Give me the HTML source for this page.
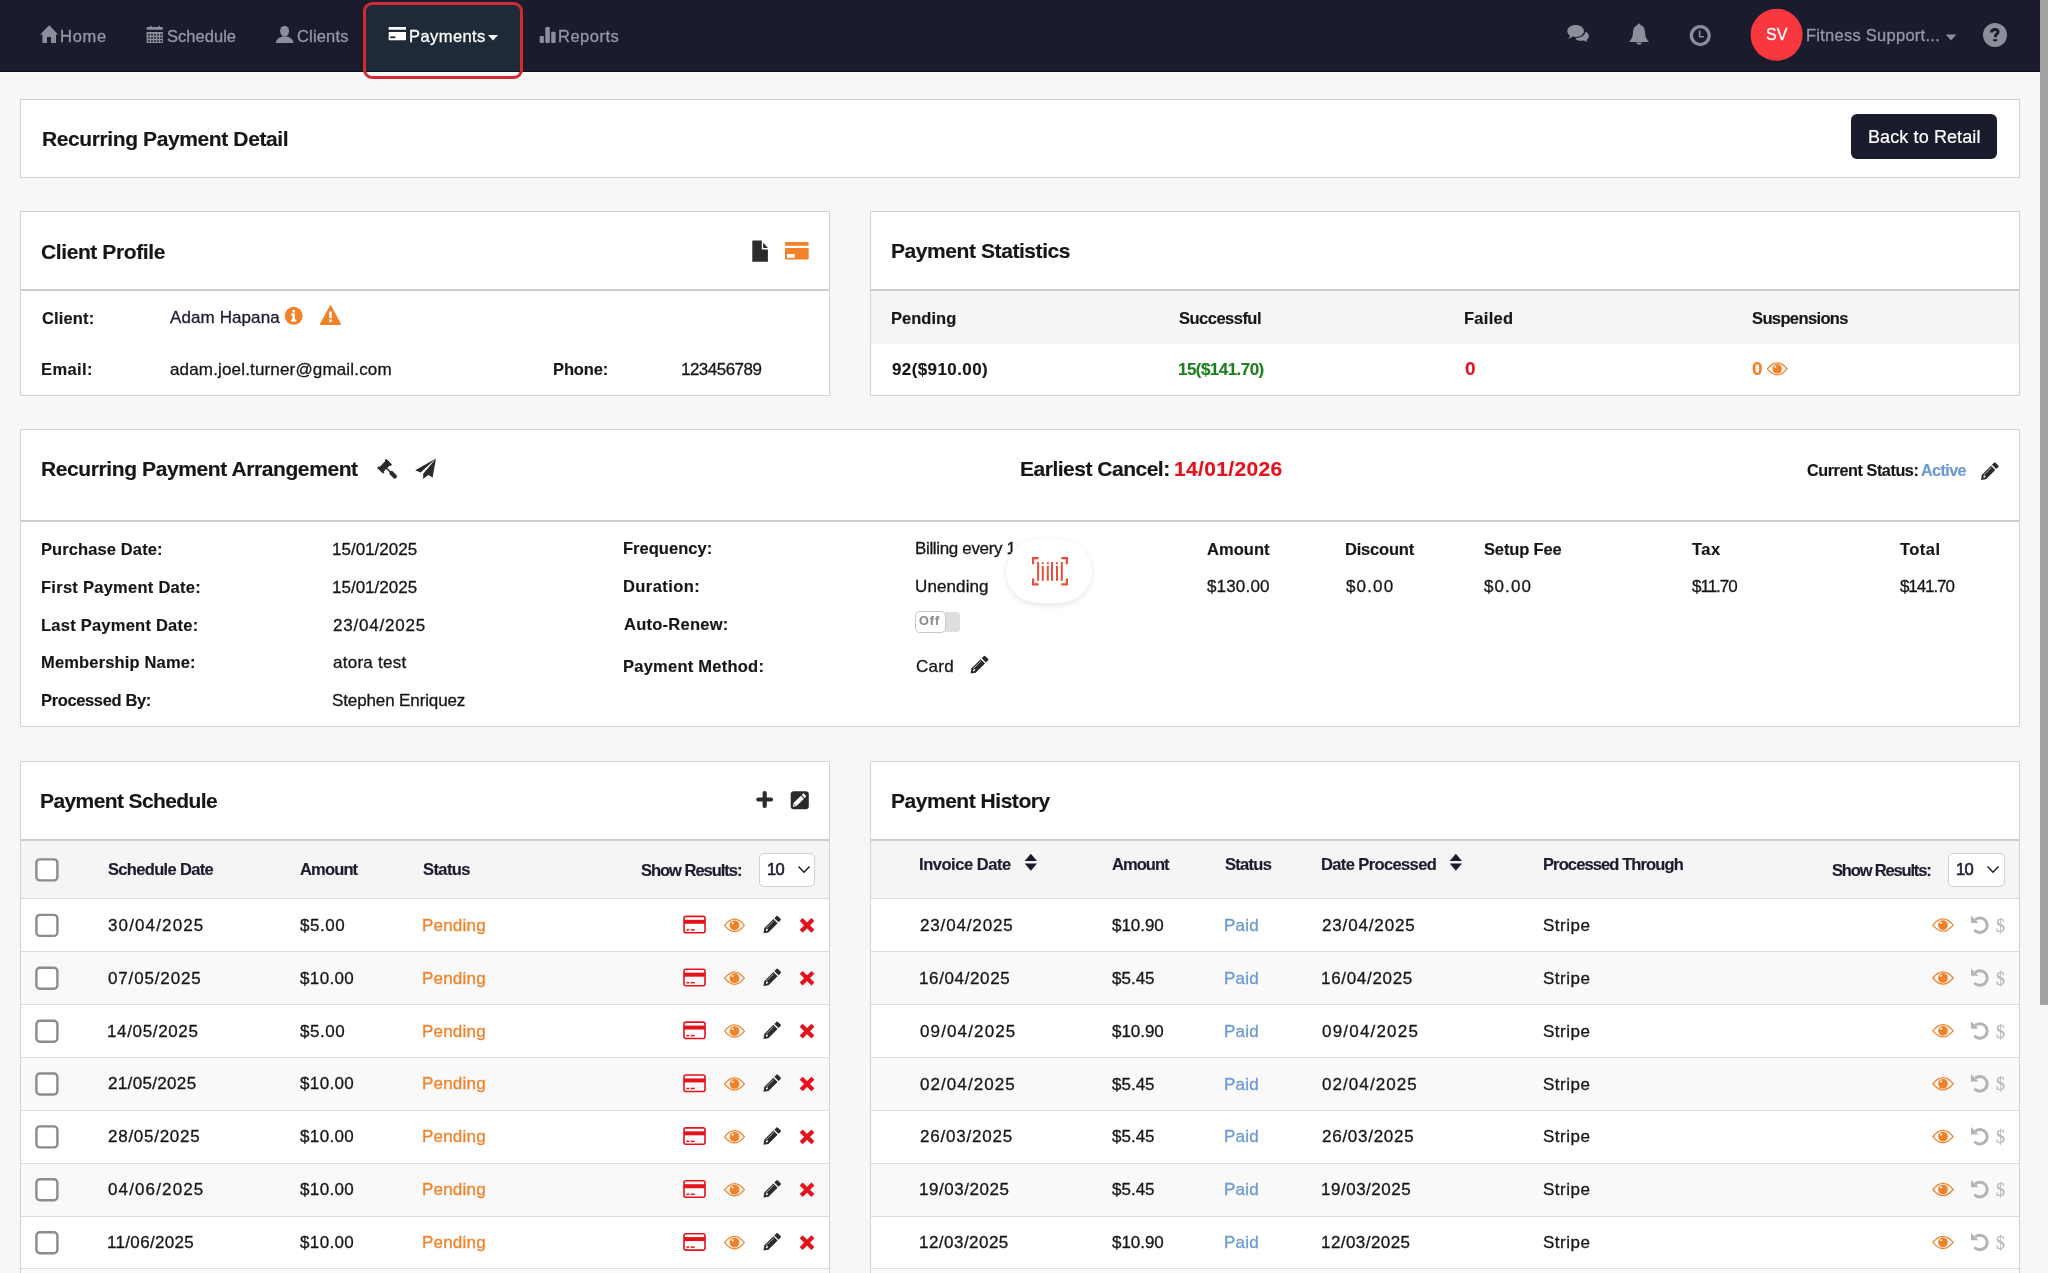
<!DOCTYPE html><html><head><meta charset="utf-8"><title>Recurring Payment Detail</title><style>
html,body{margin:0;padding:0;}
body{width:2048px;height:1273px;overflow:hidden;position:relative;background:#f7f7f7;font-family:"Liberation Sans",sans-serif;}
.t{position:absolute;white-space:nowrap;z-index:5;will-change:transform;}
</style></head><body><div style="position:absolute;left:0px;top:0px;width:2040px;height:71px;background:#1a1b2c;"></div>
<div style="position:absolute;left:0px;top:71px;width:2040px;height:1px;background:#0c0d18;"></div>
<div style="position:absolute;left:0px;top:72px;width:2040px;height:2px;background:#fbfbfb;"></div>
<div style="position:absolute;left:366px;top:5px;width:154px;height:66px;background:#1f2a38;"></div>
<div style="position:absolute;left:363px;top:2px;width:160px;height:77px;border:3px solid #cf2a35;border-radius:9px;box-sizing:border-box;"></div>
<span class="t" id="nav_home" style="left:60.10px;top:28.00px;font-size:16.5px;line-height:16.5px;font-weight:normal;color:#9598a5;letter-spacing:0.733px;-webkit-text-stroke-width:0.3px;">Home</span>
<span class="t" id="nav_sched" style="left:167.00px;top:28.00px;font-size:16.5px;line-height:16.5px;font-weight:normal;color:#9598a5;letter-spacing:0.029px;-webkit-text-stroke-width:0.3px;">Schedule</span>
<span class="t" id="nav_clients" style="left:297.00px;top:28.00px;font-size:16.5px;line-height:16.5px;font-weight:normal;color:#9598a5;letter-spacing:0.167px;-webkit-text-stroke-width:0.3px;">Clients</span>
<span class="t" id="nav_pay" style="left:409.00px;top:28.00px;font-size:16.5px;line-height:16.5px;font-weight:normal;color:#ffffff;letter-spacing:0.429px;-webkit-text-stroke-width:0.3px;-webkit-text-stroke:0.3px #fff;">Payments</span>
<span class="t" id="nav_reports" style="left:558.00px;top:28.00px;font-size:16.5px;line-height:16.5px;font-weight:normal;color:#9598a5;letter-spacing:0.500px;-webkit-text-stroke-width:0.3px;">Reports</span>
<span class="t" id="nav_fit" style="left:1806.00px;top:27.00px;font-size:16.5px;line-height:16.5px;font-weight:normal;color:#9598a5;letter-spacing:0.259px;-webkit-text-stroke-width:0.3px;">Fitness Support...</span>
<span class="t" id="nav_sv" style="left:1766.00px;top:27.00px;font-size:16px;line-height:16px;font-weight:normal;color:#ffffff;letter-spacing:0.000px;-webkit-text-stroke-width:0.3px;-webkit-text-stroke:0.3px #fff;">SV</span>
<div style="position:absolute;left:2040px;top:0px;width:8px;height:1273px;background:#f7f7f7;"></div>
<div style="position:absolute;left:2040px;top:0px;width:8px;height:1005px;background:#a3a3a3;"></div>
<div style="position:absolute;left:20px;top:99px;width:2000px;height:79px;background:#fff;border:1px solid #d2d2d2;box-sizing:border-box;"></div>
<span class="t" id="h_rpd" style="left:41.80px;top:128.00px;font-size:21px;line-height:21px;font-weight:bold;color:#161616;letter-spacing:-0.391px;-webkit-text-stroke-width:0.15px;">Recurring Payment Detail</span>
<div style="position:absolute;left:1851px;top:113.5px;width:146px;height:45px;background:#1a1b2c;border-radius:6px;"></div>
<span class="t" id="btn_back" style="left:1868.00px;top:128.00px;font-size:18px;line-height:18px;font-weight:normal;color:#ffffff;letter-spacing:0.108px;-webkit-text-stroke-width:0.3px;-webkit-text-stroke:0.2px #fff;">Back to Retail</span>
<div style="position:absolute;left:20px;top:211px;width:810px;height:185px;background:#fff;border:1px solid #d2d2d2;box-sizing:border-box;"></div>
<div style="position:absolute;left:21px;top:289px;width:808px;height:2px;background:#cdcdcd;"></div>
<span class="t" id="h_cp" style="left:41.00px;top:241.00px;font-size:21px;line-height:21px;font-weight:bold;color:#161616;letter-spacing:-0.400px;-webkit-text-stroke-width:0.15px;">Client Profile</span>
<span class="t" id="l_client" style="left:42.00px;top:310.00px;font-size:16.5px;line-height:16.5px;font-weight:bold;color:#161616;letter-spacing:0.133px;-webkit-text-stroke-width:0.15px;">Client:</span>
<span class="t" id="v_client" style="left:170.00px;top:309.00px;font-size:17px;line-height:17px;font-weight:normal;color:#1b1c30;letter-spacing:0.100px;-webkit-text-stroke-width:0.3px;">Adam Hapana</span>
<span class="t" id="l_email" style="left:41.00px;top:361.00px;font-size:16.5px;line-height:16.5px;font-weight:bold;color:#161616;letter-spacing:0.400px;-webkit-text-stroke-width:0.15px;">Email:</span>
<span class="t" id="v_email" style="left:170.00px;top:361.00px;font-size:17px;line-height:17px;font-weight:normal;color:#161616;letter-spacing:0.160px;-webkit-text-stroke-width:0.3px;">adam.joel.turner@gmail.com</span>
<span class="t" id="l_phone" style="left:553.00px;top:361.00px;font-size:16.5px;line-height:16.5px;font-weight:bold;color:#161616;letter-spacing:-0.120px;-webkit-text-stroke-width:0.15px;">Phone:</span>
<span class="t" id="v_phone" style="left:681.00px;top:361.00px;font-size:17px;line-height:17px;font-weight:normal;color:#161616;letter-spacing:-0.525px;-webkit-text-stroke-width:0.3px;">123456789</span>
<div style="position:absolute;left:870px;top:211px;width:1150px;height:185px;background:#fff;border:1px solid #d2d2d2;box-sizing:border-box;"></div>
<div style="position:absolute;left:871px;top:289px;width:1148px;height:2px;background:#cdcdcd;"></div>
<div style="position:absolute;left:871px;top:291px;width:1148px;height:53px;background:#f5f5f5;"></div>
<span class="t" id="h_ps" style="left:891.00px;top:240.00px;font-size:21px;line-height:21px;font-weight:bold;color:#161616;letter-spacing:-0.424px;-webkit-text-stroke-width:0.15px;">Payment Statistics</span>
<span class="t" id="s_pend" style="left:891.00px;top:310.00px;font-size:16.5px;line-height:16.5px;font-weight:bold;color:#161616;letter-spacing:0.033px;-webkit-text-stroke-width:0.15px;">Pending</span>
<span class="t" id="s_succ" style="left:1178.80px;top:310.00px;font-size:16.5px;line-height:16.5px;font-weight:bold;color:#161616;letter-spacing:-0.511px;-webkit-text-stroke-width:0.15px;">Successful</span>
<span class="t" id="s_fail" style="left:1464.00px;top:310.00px;font-size:16.5px;line-height:16.5px;font-weight:bold;color:#161616;letter-spacing:0.280px;-webkit-text-stroke-width:0.15px;">Failed</span>
<span class="t" id="s_susp" style="left:1752.00px;top:310.00px;font-size:16.5px;line-height:16.5px;font-weight:bold;color:#161616;letter-spacing:-0.620px;-webkit-text-stroke-width:0.15px;">Suspensions</span>
<span class="t" id="s_v1" style="left:892.00px;top:361.00px;font-size:17px;line-height:17px;font-weight:bold;color:#161616;letter-spacing:0.400px;-webkit-text-stroke-width:0.15px;">92($910.00)</span>
<span class="t" id="s_v2" style="left:1177.80px;top:361.00px;font-size:17px;line-height:17px;font-weight:bold;color:#1f7f22;letter-spacing:-0.540px;-webkit-text-stroke-width:0.15px;">15($141.70)</span>
<span class="t" id="s_v3" style="left:1465.00px;top:359.00px;font-size:19px;line-height:19px;font-weight:bold;color:#e5121c;letter-spacing:0.000px;-webkit-text-stroke-width:0.15px;">0</span>
<span class="t" id="s_v4" style="left:1752.00px;top:359.00px;font-size:19px;line-height:19px;font-weight:bold;color:#f2822a;letter-spacing:0.000px;-webkit-text-stroke-width:0.15px;">0</span>
<div style="position:absolute;left:20px;top:429px;width:2000px;height:298px;background:#fff;border:1px solid #d2d2d2;box-sizing:border-box;"></div>
<div style="position:absolute;left:21px;top:520px;width:1998px;height:2px;background:#cdcdcd;"></div>
<span class="t" id="h_rpa" style="left:41.00px;top:458.00px;font-size:21px;line-height:21px;font-weight:bold;color:#161616;letter-spacing:-0.400px;-webkit-text-stroke-width:0.15px;">Recurring Payment Arrangement</span>
<span class="t" id="h_ec" style="left:1020.00px;top:458.00px;font-size:21px;line-height:21px;font-weight:bold;color:#161616;letter-spacing:-0.493px;-webkit-text-stroke-width:0.15px;">Earliest Cancel:</span>
<span class="t" id="h_ecd" style="left:1174.00px;top:458.00px;font-size:21px;line-height:21px;font-weight:bold;color:#e5121c;letter-spacing:0.333px;-webkit-text-stroke-width:0.15px;">14/01/2026</span>
<span class="t" id="h_cs" style="left:1807.00px;top:462.00px;font-size:16.2px;line-height:16.2px;font-weight:bold;color:#161616;letter-spacing:-0.429px;-webkit-text-stroke-width:0.15px;">Current Status:</span>
<span class="t" id="h_act" style="left:1921.10px;top:462.00px;font-size:16.2px;line-height:16.2px;font-weight:bold;color:#6b9ad2;letter-spacing:-0.600px;-webkit-text-stroke-width:0.15px;">Active</span>
<span class="t" id="a_l0" style="left:41.00px;top:541.00px;font-size:16.5px;line-height:16.5px;font-weight:bold;color:#161616;letter-spacing:0.108px;-webkit-text-stroke-width:0.15px;">Purchase Date:</span>
<span class="t" id="a_v0" style="left:332.00px;top:541.00px;font-size:17px;line-height:17px;font-weight:normal;color:#161616;letter-spacing:0.000px;-webkit-text-stroke-width:0.3px;">15/01/2025</span>
<span class="t" id="a_l1" style="left:41.00px;top:579.00px;font-size:16.5px;line-height:16.5px;font-weight:bold;color:#161616;letter-spacing:0.267px;-webkit-text-stroke-width:0.15px;">First Payment Date:</span>
<span class="t" id="a_v1" style="left:332.00px;top:579.00px;font-size:17px;line-height:17px;font-weight:normal;color:#161616;letter-spacing:0.000px;-webkit-text-stroke-width:0.3px;">15/01/2025</span>
<span class="t" id="a_l2" style="left:41.00px;top:617.00px;font-size:16.5px;line-height:16.5px;font-weight:bold;color:#161616;letter-spacing:0.235px;-webkit-text-stroke-width:0.15px;">Last Payment Date:</span>
<span class="t" id="a_v2" style="left:333.00px;top:617.00px;font-size:17px;line-height:17px;font-weight:normal;color:#161616;letter-spacing:0.800px;-webkit-text-stroke-width:0.3px;">23/04/2025</span>
<span class="t" id="a_l3" style="left:41.00px;top:654.00px;font-size:16.5px;line-height:16.5px;font-weight:bold;color:#161616;letter-spacing:0.160px;-webkit-text-stroke-width:0.15px;">Membership Name:</span>
<span class="t" id="a_v3" style="left:333.00px;top:654.00px;font-size:17px;line-height:17px;font-weight:normal;color:#161616;letter-spacing:0.267px;-webkit-text-stroke-width:0.3px;">atora test</span>
<span class="t" id="a_l4" style="left:41.00px;top:692.00px;font-size:16.5px;line-height:16.5px;font-weight:bold;color:#161616;letter-spacing:-0.367px;-webkit-text-stroke-width:0.15px;">Processed By:</span>
<span class="t" id="a_v4" style="left:332.00px;top:692.00px;font-size:17px;line-height:17px;font-weight:normal;color:#161616;letter-spacing:-0.120px;-webkit-text-stroke-width:0.3px;">Stephen Enriquez</span>
<span class="t" id="a_m0" style="left:623.20px;top:540.00px;font-size:16.5px;line-height:16.5px;font-weight:bold;color:#161616;letter-spacing:0.022px;-webkit-text-stroke-width:0.15px;">Frequency:</span>
<span class="t" id="a_m1" style="left:623.20px;top:578.00px;font-size:16.5px;line-height:16.5px;font-weight:bold;color:#161616;letter-spacing:0.425px;-webkit-text-stroke-width:0.15px;">Duration:</span>
<span class="t" id="a_m2" style="left:624.20px;top:616.00px;font-size:16.5px;line-height:16.5px;font-weight:bold;color:#161616;letter-spacing:0.260px;-webkit-text-stroke-width:0.15px;">Auto-Renew:</span>
<span class="t" id="a_m3" style="left:623.20px;top:658.00px;font-size:16.5px;line-height:16.5px;font-weight:bold;color:#161616;letter-spacing:0.243px;-webkit-text-stroke-width:0.15px;">Payment Method:</span>
<span class="t" id="a_freq" style="left:914.90px;top:540.00px;font-size:17px;line-height:17px;font-weight:normal;color:#161616;letter-spacing:-0.343px;-webkit-text-stroke-width:0.3px;">Billing every 1</span>
<span class="t" id="a_dur" style="left:914.90px;top:578.00px;font-size:17px;line-height:17px;font-weight:normal;color:#161616;letter-spacing:0.114px;-webkit-text-stroke-width:0.3px;">Unending</span>
<span class="t" id="a_card" style="left:915.90px;top:658.00px;font-size:17px;line-height:17px;font-weight:normal;color:#161616;letter-spacing:0.267px;-webkit-text-stroke-width:0.3px;">Card</span>
<span class="t" id="a_h0" style="left:1207.00px;top:541.00px;font-size:16.5px;line-height:16.5px;font-weight:bold;color:#161616;letter-spacing:0.040px;-webkit-text-stroke-width:0.15px;">Amount</span>
<span class="t" id="a_n0" style="left:1207.00px;top:578.00px;font-size:17px;line-height:17px;font-weight:normal;color:#161616;letter-spacing:0.167px;-webkit-text-stroke-width:0.3px;">$130.00</span>
<span class="t" id="a_h1" style="left:1345.00px;top:541.00px;font-size:16.5px;line-height:16.5px;font-weight:bold;color:#161616;letter-spacing:-0.200px;-webkit-text-stroke-width:0.15px;">Discount</span>
<span class="t" id="a_n1" style="left:1346.00px;top:578.00px;font-size:17px;line-height:17px;font-weight:normal;color:#161616;letter-spacing:1.150px;-webkit-text-stroke-width:0.3px;">$0.00</span>
<span class="t" id="a_h2" style="left:1484.10px;top:541.00px;font-size:16.5px;line-height:16.5px;font-weight:bold;color:#161616;letter-spacing:-0.150px;-webkit-text-stroke-width:0.15px;">Setup Fee</span>
<span class="t" id="a_n2" style="left:1484.10px;top:578.00px;font-size:17px;line-height:17px;font-weight:normal;color:#161616;letter-spacing:1.100px;-webkit-text-stroke-width:0.3px;">$0.00</span>
<span class="t" id="a_h3" style="left:1692.10px;top:541.00px;font-size:16.5px;line-height:16.5px;font-weight:bold;color:#161616;letter-spacing:0.500px;-webkit-text-stroke-width:0.15px;">Tax</span>
<span class="t" id="a_n3" style="left:1692.10px;top:578.00px;font-size:17px;line-height:17px;font-weight:normal;color:#161616;letter-spacing:-1.000px;-webkit-text-stroke-width:0.3px;">$11.70</span>
<span class="t" id="a_h4" style="left:1900.10px;top:541.00px;font-size:16.5px;line-height:16.5px;font-weight:bold;color:#161616;letter-spacing:0.450px;-webkit-text-stroke-width:0.15px;">Total</span>
<span class="t" id="a_n4" style="left:1900.10px;top:578.00px;font-size:17px;line-height:17px;font-weight:normal;color:#161616;letter-spacing:-1.100px;-webkit-text-stroke-width:0.3px;">$141.70</span>
<div style="position:absolute;left:945px;top:612px;width:15px;height:20px;background:#dedede;border-radius:0 4px 4px 0;"></div>
<div style="position:absolute;left:915px;top:611px;width:31px;height:22px;background:#fff;border:1px solid #c9c9c9;border-radius:5px;box-sizing:border-box;"></div>
<span class="t" id="a_off" style="left:919.00px;top:615.00px;font-size:12.5px;line-height:12.5px;font-weight:bold;color:#8a8a8a;letter-spacing:1.000px;-webkit-text-stroke-width:0.15px;">Off</span>
<div style="position:absolute;left:1006px;top:539.3px;width:86.2px;height:63.6px;background:#fff;border-radius:32px;box-shadow:0 2px 6px rgba(0,0,0,0.10),0 0 1px rgba(0,0,0,0.08);z-index:6;"></div>
<div style="position:absolute;left:20px;top:761px;width:810px;height:520px;background:#fff;border:1px solid #d2d2d2;box-sizing:border-box;"></div>
<div style="position:absolute;left:21px;top:839px;width:808px;height:2px;background:#cdcdcd;"></div>
<div style="position:absolute;left:21px;top:841px;width:808px;height:57px;background:#f5f5f5;"></div>
<span class="t" id="h_sched" style="left:40.20px;top:790.00px;font-size:21px;line-height:21px;font-weight:bold;color:#161616;letter-spacing:-0.600px;-webkit-text-stroke-width:0.15px;">Payment Schedule</span>
<span class="t" id="t_sd" style="left:108.00px;top:861.00px;font-size:16.5px;line-height:16.5px;font-weight:bold;color:#1b1c30;letter-spacing:-0.667px;-webkit-text-stroke-width:0.15px;">Schedule Date</span>
<span class="t" id="t_am" style="left:299.90px;top:861.00px;font-size:16.5px;line-height:16.5px;font-weight:bold;color:#1b1c30;letter-spacing:-0.840px;-webkit-text-stroke-width:0.15px;">Amount</span>
<span class="t" id="t_st" style="left:422.90px;top:861.00px;font-size:16.5px;line-height:16.5px;font-weight:bold;color:#1b1c30;letter-spacing:-0.600px;-webkit-text-stroke-width:0.15px;">Status</span>
<span class="t" id="t_sr" style="left:641.10px;top:862.00px;font-size:16.5px;line-height:16.5px;font-weight:bold;color:#1b1c30;letter-spacing:-1.017px;-webkit-text-stroke-width:0.15px;">Show Results:</span>
<div style="position:absolute;left:758.5px;top:852.5px;width:56px;height:34px;background:#fff;border:1px solid #d0d0d0;border-radius:5px;box-sizing:border-box;"></div>
<span class="t" id="t_10" style="left:767.00px;top:861.00px;font-size:16.5px;line-height:16.5px;font-weight:normal;color:#1b1c30;letter-spacing:-0.600px;-webkit-text-stroke-width:0.3px;-webkit-text-stroke-width:0.6px;">10</span>
<div style="position:absolute;left:870px;top:761px;width:1150px;height:520px;background:#fff;border:1px solid #d2d2d2;box-sizing:border-box;"></div>
<div style="position:absolute;left:871px;top:839px;width:1148px;height:2px;background:#cdcdcd;"></div>
<div style="position:absolute;left:871px;top:841px;width:1148px;height:57px;background:#f5f5f5;"></div>
<span class="t" id="h_hist" style="left:891.00px;top:790.00px;font-size:21px;line-height:21px;font-weight:bold;color:#161616;letter-spacing:-0.471px;-webkit-text-stroke-width:0.15px;">Payment History</span>
<span class="t" id="u_id" style="left:919.00px;top:856.00px;font-size:16.5px;line-height:16.5px;font-weight:bold;color:#1b1c30;letter-spacing:-0.455px;-webkit-text-stroke-width:0.15px;">Invoice Date</span>
<span class="t" id="u_am" style="left:1111.80px;top:856.00px;font-size:16.5px;line-height:16.5px;font-weight:bold;color:#1b1c30;letter-spacing:-0.960px;-webkit-text-stroke-width:0.15px;">Amount</span>
<span class="t" id="u_st" style="left:1224.80px;top:856.00px;font-size:16.5px;line-height:16.5px;font-weight:bold;color:#1b1c30;letter-spacing:-0.720px;-webkit-text-stroke-width:0.15px;">Status</span>
<span class="t" id="u_dp" style="left:1321.10px;top:856.00px;font-size:16.5px;line-height:16.5px;font-weight:bold;color:#1b1c30;letter-spacing:-0.615px;-webkit-text-stroke-width:0.15px;">Date Processed</span>
<span class="t" id="u_pt" style="left:1543.00px;top:856.00px;font-size:16.5px;line-height:16.5px;font-weight:bold;color:#1b1c30;letter-spacing:-0.888px;-webkit-text-stroke-width:0.15px;">Processed Through</span>
<span class="t" id="u_sr" style="left:1832.00px;top:862.00px;font-size:16.5px;line-height:16.5px;font-weight:bold;color:#1b1c30;letter-spacing:-1.167px;-webkit-text-stroke-width:0.15px;">Show Results:</span>
<div style="position:absolute;left:1948px;top:852.5px;width:57px;height:34px;background:#fff;border:1px solid #d0d0d0;border-radius:5px;box-sizing:border-box;"></div>
<span class="t" id="u_10" style="left:1956.10px;top:861.00px;font-size:16.5px;line-height:16.5px;font-weight:normal;color:#1b1c30;letter-spacing:-0.600px;-webkit-text-stroke-width:0.3px;-webkit-text-stroke-width:0.6px;">10</span>
<div style="position:absolute;left:21px;top:898.25px;width:808px;height:54px;background:#ffffff;border-top:1px solid #dddddd;box-sizing:border-box;"></div>
<div style="position:absolute;left:871px;top:898.25px;width:1148px;height:54px;background:#ffffff;border-top:1px solid #dddddd;box-sizing:border-box;"></div>
<div style="position:absolute;left:21px;top:951.13px;width:808px;height:54px;background:#f9f9f9;border-top:1px solid #dddddd;box-sizing:border-box;"></div>
<div style="position:absolute;left:871px;top:951.13px;width:1148px;height:54px;background:#f9f9f9;border-top:1px solid #dddddd;box-sizing:border-box;"></div>
<div style="position:absolute;left:21px;top:1004.01px;width:808px;height:54px;background:#ffffff;border-top:1px solid #dddddd;box-sizing:border-box;"></div>
<div style="position:absolute;left:871px;top:1004.01px;width:1148px;height:54px;background:#ffffff;border-top:1px solid #dddddd;box-sizing:border-box;"></div>
<div style="position:absolute;left:21px;top:1056.89px;width:808px;height:54px;background:#f9f9f9;border-top:1px solid #dddddd;box-sizing:border-box;"></div>
<div style="position:absolute;left:871px;top:1056.89px;width:1148px;height:54px;background:#f9f9f9;border-top:1px solid #dddddd;box-sizing:border-box;"></div>
<div style="position:absolute;left:21px;top:1109.77px;width:808px;height:54px;background:#ffffff;border-top:1px solid #dddddd;box-sizing:border-box;"></div>
<div style="position:absolute;left:871px;top:1109.77px;width:1148px;height:54px;background:#ffffff;border-top:1px solid #dddddd;box-sizing:border-box;"></div>
<div style="position:absolute;left:21px;top:1162.65px;width:808px;height:54px;background:#f9f9f9;border-top:1px solid #dddddd;box-sizing:border-box;"></div>
<div style="position:absolute;left:871px;top:1162.65px;width:1148px;height:54px;background:#f9f9f9;border-top:1px solid #dddddd;box-sizing:border-box;"></div>
<div style="position:absolute;left:21px;top:1215.53px;width:808px;height:54px;background:#ffffff;border-top:1px solid #dddddd;box-sizing:border-box;"></div>
<div style="position:absolute;left:871px;top:1215.53px;width:1148px;height:54px;background:#ffffff;border-top:1px solid #dddddd;box-sizing:border-box;"></div>
<div style="position:absolute;left:21px;top:1268.41px;width:808px;height:54px;background:#f9f9f9;border-top:1px solid #dddddd;box-sizing:border-box;"></div>
<div style="position:absolute;left:871px;top:1268.41px;width:1148px;height:54px;background:#f9f9f9;border-top:1px solid #dddddd;box-sizing:border-box;"></div>
<span class="t" id="r_d0" style="left:108.00px;top:917.00px;font-size:17px;line-height:17px;font-weight:normal;color:#161616;letter-spacing:1.133px;-webkit-text-stroke-width:0.3px;">30/04/2025</span>
<span class="t" id="r_a0" style="left:299.90px;top:917.00px;font-size:17px;line-height:17px;font-weight:normal;color:#161616;letter-spacing:0.550px;-webkit-text-stroke-width:0.3px;">$5.00</span>
<span class="t" id="r_s0" style="left:421.90px;top:917.00px;font-size:17px;line-height:17px;font-weight:normal;color:#f2822a;letter-spacing:0.200px;-webkit-text-stroke-width:0.3px;">Pending</span>
<span class="t" id="r_d1" style="left:108.00px;top:970.00px;font-size:17px;line-height:17px;font-weight:normal;color:#161616;letter-spacing:0.844px;-webkit-text-stroke-width:0.3px;">07/05/2025</span>
<span class="t" id="r_a1" style="left:299.90px;top:970.00px;font-size:17px;line-height:17px;font-weight:normal;color:#161616;letter-spacing:0.360px;-webkit-text-stroke-width:0.3px;">$10.00</span>
<span class="t" id="r_s1" style="left:421.90px;top:970.00px;font-size:17px;line-height:17px;font-weight:normal;color:#f2822a;letter-spacing:0.200px;-webkit-text-stroke-width:0.3px;">Pending</span>
<span class="t" id="r_d2" style="left:107.00px;top:1023.00px;font-size:17px;line-height:17px;font-weight:normal;color:#161616;letter-spacing:0.644px;-webkit-text-stroke-width:0.3px;">14/05/2025</span>
<span class="t" id="r_a2" style="left:299.90px;top:1023.00px;font-size:17px;line-height:17px;font-weight:normal;color:#161616;letter-spacing:0.550px;-webkit-text-stroke-width:0.3px;">$5.00</span>
<span class="t" id="r_s2" style="left:421.90px;top:1023.00px;font-size:17px;line-height:17px;font-weight:normal;color:#f2822a;letter-spacing:0.200px;-webkit-text-stroke-width:0.3px;">Pending</span>
<span class="t" id="r_d3" style="left:108.00px;top:1075.00px;font-size:17px;line-height:17px;font-weight:normal;color:#161616;letter-spacing:0.333px;-webkit-text-stroke-width:0.3px;">21/05/2025</span>
<span class="t" id="r_a3" style="left:299.90px;top:1075.00px;font-size:17px;line-height:17px;font-weight:normal;color:#161616;letter-spacing:0.360px;-webkit-text-stroke-width:0.3px;">$10.00</span>
<span class="t" id="r_s3" style="left:421.90px;top:1075.00px;font-size:17px;line-height:17px;font-weight:normal;color:#f2822a;letter-spacing:0.200px;-webkit-text-stroke-width:0.3px;">Pending</span>
<span class="t" id="r_d4" style="left:108.00px;top:1128.00px;font-size:17px;line-height:17px;font-weight:normal;color:#161616;letter-spacing:0.733px;-webkit-text-stroke-width:0.3px;">28/05/2025</span>
<span class="t" id="r_a4" style="left:299.90px;top:1128.00px;font-size:17px;line-height:17px;font-weight:normal;color:#161616;letter-spacing:0.360px;-webkit-text-stroke-width:0.3px;">$10.00</span>
<span class="t" id="r_s4" style="left:421.90px;top:1128.00px;font-size:17px;line-height:17px;font-weight:normal;color:#f2822a;letter-spacing:0.200px;-webkit-text-stroke-width:0.3px;">Pending</span>
<span class="t" id="r_d5" style="left:108.00px;top:1181.00px;font-size:17px;line-height:17px;font-weight:normal;color:#161616;letter-spacing:1.133px;-webkit-text-stroke-width:0.3px;">04/06/2025</span>
<span class="t" id="r_a5" style="left:299.90px;top:1181.00px;font-size:17px;line-height:17px;font-weight:normal;color:#161616;letter-spacing:0.360px;-webkit-text-stroke-width:0.3px;">$10.00</span>
<span class="t" id="r_s5" style="left:421.90px;top:1181.00px;font-size:17px;line-height:17px;font-weight:normal;color:#f2822a;letter-spacing:0.200px;-webkit-text-stroke-width:0.3px;">Pending</span>
<span class="t" id="r_d6" style="left:107.00px;top:1234.00px;font-size:17px;line-height:17px;font-weight:normal;color:#161616;letter-spacing:0.333px;-webkit-text-stroke-width:0.3px;">11/06/2025</span>
<span class="t" id="r_a6" style="left:299.90px;top:1234.00px;font-size:17px;line-height:17px;font-weight:normal;color:#161616;letter-spacing:0.360px;-webkit-text-stroke-width:0.3px;">$10.00</span>
<span class="t" id="r_s6" style="left:421.90px;top:1234.00px;font-size:17px;line-height:17px;font-weight:normal;color:#f2822a;letter-spacing:0.200px;-webkit-text-stroke-width:0.3px;">Pending</span>
<span class="t" id="h_d0" style="left:920.00px;top:917.00px;font-size:17px;line-height:17px;font-weight:normal;color:#161616;letter-spacing:0.844px;-webkit-text-stroke-width:0.3px;">23/04/2025</span>
<span class="t" id="h_a0" style="left:1111.80px;top:917.00px;font-size:17px;line-height:17px;font-weight:normal;color:#161616;letter-spacing:-0.040px;-webkit-text-stroke-width:0.3px;">$10.90</span>
<span class="t" id="h_p0" style="left:1223.80px;top:917.00px;font-size:17px;line-height:17px;font-weight:normal;color:#6b9ad2;letter-spacing:0.267px;-webkit-text-stroke-width:0.3px;">Paid</span>
<span class="t" id="h_e0" style="left:1322.10px;top:917.00px;font-size:17px;line-height:17px;font-weight:normal;color:#161616;letter-spacing:0.844px;-webkit-text-stroke-width:0.3px;">23/04/2025</span>
<span class="t" id="h_s0" style="left:1543.00px;top:917.00px;font-size:17px;line-height:17px;font-weight:normal;color:#161616;letter-spacing:0.520px;-webkit-text-stroke-width:0.3px;">Stripe</span>
<span class="t" id="h_d1" style="left:919.00px;top:970.00px;font-size:17px;line-height:17px;font-weight:normal;color:#161616;letter-spacing:0.622px;-webkit-text-stroke-width:0.3px;">16/04/2025</span>
<span class="t" id="h_a1" style="left:1111.80px;top:970.00px;font-size:17px;line-height:17px;font-weight:normal;color:#161616;letter-spacing:-0.000px;-webkit-text-stroke-width:0.3px;">$5.45</span>
<span class="t" id="h_p1" style="left:1223.80px;top:970.00px;font-size:17px;line-height:17px;font-weight:normal;color:#6b9ad2;letter-spacing:0.267px;-webkit-text-stroke-width:0.3px;">Paid</span>
<span class="t" id="h_e1" style="left:1321.10px;top:970.00px;font-size:17px;line-height:17px;font-weight:normal;color:#161616;letter-spacing:0.689px;-webkit-text-stroke-width:0.3px;">16/04/2025</span>
<span class="t" id="h_s1" style="left:1543.00px;top:970.00px;font-size:17px;line-height:17px;font-weight:normal;color:#161616;letter-spacing:0.520px;-webkit-text-stroke-width:0.3px;">Stripe</span>
<span class="t" id="h_d2" style="left:920.00px;top:1023.00px;font-size:17px;line-height:17px;font-weight:normal;color:#161616;letter-spacing:1.133px;-webkit-text-stroke-width:0.3px;">09/04/2025</span>
<span class="t" id="h_a2" style="left:1111.80px;top:1023.00px;font-size:17px;line-height:17px;font-weight:normal;color:#161616;letter-spacing:-0.040px;-webkit-text-stroke-width:0.3px;">$10.90</span>
<span class="t" id="h_p2" style="left:1223.80px;top:1023.00px;font-size:17px;line-height:17px;font-weight:normal;color:#6b9ad2;letter-spacing:0.267px;-webkit-text-stroke-width:0.3px;">Paid</span>
<span class="t" id="h_e2" style="left:1322.10px;top:1023.00px;font-size:17px;line-height:17px;font-weight:normal;color:#161616;letter-spacing:1.200px;-webkit-text-stroke-width:0.3px;">09/04/2025</span>
<span class="t" id="h_s2" style="left:1543.00px;top:1023.00px;font-size:17px;line-height:17px;font-weight:normal;color:#161616;letter-spacing:0.520px;-webkit-text-stroke-width:0.3px;">Stripe</span>
<span class="t" id="h_d3" style="left:920.00px;top:1076.00px;font-size:17px;line-height:17px;font-weight:normal;color:#161616;letter-spacing:1.067px;-webkit-text-stroke-width:0.3px;">02/04/2025</span>
<span class="t" id="h_a3" style="left:1111.80px;top:1076.00px;font-size:17px;line-height:17px;font-weight:normal;color:#161616;letter-spacing:-0.000px;-webkit-text-stroke-width:0.3px;">$5.45</span>
<span class="t" id="h_p3" style="left:1223.80px;top:1076.00px;font-size:17px;line-height:17px;font-weight:normal;color:#6b9ad2;letter-spacing:0.267px;-webkit-text-stroke-width:0.3px;">Paid</span>
<span class="t" id="h_e3" style="left:1322.10px;top:1076.00px;font-size:17px;line-height:17px;font-weight:normal;color:#161616;letter-spacing:1.067px;-webkit-text-stroke-width:0.3px;">02/04/2025</span>
<span class="t" id="h_s3" style="left:1543.00px;top:1076.00px;font-size:17px;line-height:17px;font-weight:normal;color:#161616;letter-spacing:0.520px;-webkit-text-stroke-width:0.3px;">Stripe</span>
<span class="t" id="h_d4" style="left:920.00px;top:1128.00px;font-size:17px;line-height:17px;font-weight:normal;color:#161616;letter-spacing:0.800px;-webkit-text-stroke-width:0.3px;">26/03/2025</span>
<span class="t" id="h_a4" style="left:1111.80px;top:1128.00px;font-size:17px;line-height:17px;font-weight:normal;color:#161616;letter-spacing:-0.000px;-webkit-text-stroke-width:0.3px;">$5.45</span>
<span class="t" id="h_p4" style="left:1223.80px;top:1128.00px;font-size:17px;line-height:17px;font-weight:normal;color:#6b9ad2;letter-spacing:0.267px;-webkit-text-stroke-width:0.3px;">Paid</span>
<span class="t" id="h_e4" style="left:1322.10px;top:1128.00px;font-size:17px;line-height:17px;font-weight:normal;color:#161616;letter-spacing:0.733px;-webkit-text-stroke-width:0.3px;">26/03/2025</span>
<span class="t" id="h_s4" style="left:1543.00px;top:1128.00px;font-size:17px;line-height:17px;font-weight:normal;color:#161616;letter-spacing:0.520px;-webkit-text-stroke-width:0.3px;">Stripe</span>
<span class="t" id="h_d5" style="left:919.00px;top:1181.00px;font-size:17px;line-height:17px;font-weight:normal;color:#161616;letter-spacing:0.533px;-webkit-text-stroke-width:0.3px;">19/03/2025</span>
<span class="t" id="h_a5" style="left:1111.80px;top:1181.00px;font-size:17px;line-height:17px;font-weight:normal;color:#161616;letter-spacing:-0.000px;-webkit-text-stroke-width:0.3px;">$5.45</span>
<span class="t" id="h_p5" style="left:1223.80px;top:1181.00px;font-size:17px;line-height:17px;font-weight:normal;color:#6b9ad2;letter-spacing:0.267px;-webkit-text-stroke-width:0.3px;">Paid</span>
<span class="t" id="h_e5" style="left:1321.10px;top:1181.00px;font-size:17px;line-height:17px;font-weight:normal;color:#161616;letter-spacing:0.511px;-webkit-text-stroke-width:0.3px;">19/03/2025</span>
<span class="t" id="h_s5" style="left:1543.00px;top:1181.00px;font-size:17px;line-height:17px;font-weight:normal;color:#161616;letter-spacing:0.520px;-webkit-text-stroke-width:0.3px;">Stripe</span>
<span class="t" id="h_d6" style="left:919.00px;top:1234.00px;font-size:17px;line-height:17px;font-weight:normal;color:#161616;letter-spacing:0.467px;-webkit-text-stroke-width:0.3px;">12/03/2025</span>
<span class="t" id="h_a6" style="left:1111.80px;top:1234.00px;font-size:17px;line-height:17px;font-weight:normal;color:#161616;letter-spacing:-0.040px;-webkit-text-stroke-width:0.3px;">$10.90</span>
<span class="t" id="h_p6" style="left:1223.80px;top:1234.00px;font-size:17px;line-height:17px;font-weight:normal;color:#6b9ad2;letter-spacing:0.267px;-webkit-text-stroke-width:0.3px;">Paid</span>
<span class="t" id="h_e6" style="left:1321.10px;top:1234.00px;font-size:17px;line-height:17px;font-weight:normal;color:#161616;letter-spacing:0.444px;-webkit-text-stroke-width:0.3px;">12/03/2025</span>
<span class="t" id="h_s6" style="left:1543.00px;top:1234.00px;font-size:17px;line-height:17px;font-weight:normal;color:#161616;letter-spacing:0.520px;-webkit-text-stroke-width:0.3px;">Stripe</span>
<svg class="ic" style="position:absolute;left:0;top:0;z-index:4" width="2048" height="1273" viewBox="0 0 2048 1273"><path fill="#2b2b2b" d="M752.3,240.6 L761.8,240.6 L761.8,249.4 L767.9,249.4 L767.9,261.8 L752.3,261.8 Z"/><path fill="#2b2b2b" d="M763.2,242.6 L767.9,247.9 L763.2,247.9 Z"/><rect fill="#f2822a" x="785" y="241.9" width="23.7" height="3.8" rx="1"/><rect fill="#f2822a" x="785" y="248" width="23.7" height="11.6" rx="1.2"/><rect fill="#fff" x="787" y="254" width="7.7" height="3.8"/><circle cx="293.7" cy="315.8" r="9" fill="#f2822a"/><rect fill="#fff" x="292.4" y="310" width="2.6" height="2.4"/><path fill="#fff" d="M291,313.6 L295,313.6 L295,319.6 L296.4,319.6 L296.4,321.4 L291,321.4 L291,319.6 L292.4,319.6 L292.4,315.4 L291,315.4 Z"/><path fill="#f2822a" stroke="#f2822a" stroke-width="1.5" stroke-linejoin="round" d="M330.5,306 L340.3,324.2 L320.7,324.2 Z"/><rect fill="#fff" x="329.2" y="311.5" width="2.6" height="6.6"/><rect fill="#fff" x="329.2" y="319.5" width="2.6" height="2.5"/><path fill="none" stroke="#f2822a" stroke-width="1.25" d="M1767.325,368.8 Q1777.2,356.85 1787.075,368.8 Q1777.2,380.75 1767.325,368.8 Z"/><circle cx="1777.2" cy="368.8" r="4.75" fill="#f2822a"/><circle cx="1775.35" cy="366.69" r="1.06" fill="#fff"/><g transform="translate(384.6,466.2) rotate(-45)" fill="#2b2b2b"><rect x="-6.2" y="-3.1" width="12.4" height="6.2"/><rect x="-6.4" y="-4.2" width="2.2" height="8.4" rx="0.6"/><rect x="4.2" y="-4.2" width="2.2" height="8.4" rx="0.6"/><rect x="-0.75" y="2.5" width="1.5" height="6"/><rect x="-2.1" y="7.6" width="4.2" height="9" rx="2"/></g><path fill="#2b2b2b" d="M436,458.4 L415.2,470.2 L420.6,472.6 Z M436,458.4 L432.6,477.4 L428.2,475.1 L423.1,478.9 L423.2,473.8 Z"/><g transform="translate(1980.4,462.4) scale(1.0111)"><path fill="#2b2b2b" d="M0.60,17.40 L1.34,12.49 L10.53,3.29 L14.71,7.47 L5.51,16.66 Z M11.45,2.37 L13.79,0.04 L14.81,0.08 L17.92,3.19 L17.96,4.21 L15.63,6.55 Z"/><ellipse cx="3.99" cy="14.01" rx="1.3" ry="0.8" transform="rotate(-45 3.99 14.01)" fill="#fff"/><path fill="none" stroke="#fff" stroke-width="0.6" d="M3.22,12.66 L10.99,4.88"/></g><g transform="translate(970,655.8) scale(1.0222)"><path fill="#2b2b2b" d="M0.60,17.40 L1.34,12.49 L10.53,3.29 L14.71,7.47 L5.51,16.66 Z M11.45,2.37 L13.79,0.04 L14.81,0.08 L17.92,3.19 L17.96,4.21 L15.63,6.55 Z"/><ellipse cx="3.99" cy="14.01" rx="1.3" ry="0.8" transform="rotate(-45 3.99 14.01)" fill="#fff"/><path fill="none" stroke="#fff" stroke-width="0.6" d="M3.22,12.66 L10.99,4.88"/></g><path fill="none" stroke="#2b2b2b" stroke-width="4.2" stroke-linecap="round" d="M764.7,793 L764.7,806 M758.3,799.5 L771,799.5"/><rect fill="#2b2b2b" x="790.7" y="791.2" width="18.1" height="18" rx="3.2"/><g transform="translate(792.8,793.3) scale(0.75)"><path fill="#fff" d="M13.2,0.8 C13.8,0.2 14.6,0.2 15.2,0.8 L17.2,2.8 C17.8,3.4 17.8,4.2 17.2,4.8 L15.8,6.2 L11.8,2.2 Z"/><path fill="#fff" d="M10.8,3.2 L14.8,7.2 L5,17 L0.4,18 L0.2,17.6 L1,13 Z"/><path fill="#2b2b2b" d="M2.2,14.2 L3.8,15.8 L1.6,16.4 Z"/></g><rect x="36.4" y="859.4" width="21" height="21" rx="3.5" fill="#fff" stroke="#8c8c8c" stroke-width="2.4"/><rect x="36.4" y="914.9" width="21" height="21" rx="3.5" fill="#fff" stroke="#8c8c8c" stroke-width="2.4"/><rect x="36.4" y="967.8" width="21" height="21" rx="3.5" fill="#fff" stroke="#8c8c8c" stroke-width="2.4"/><rect x="36.4" y="1020.7" width="21" height="21" rx="3.5" fill="#fff" stroke="#8c8c8c" stroke-width="2.4"/><rect x="36.4" y="1073.5" width="21" height="21" rx="3.5" fill="#fff" stroke="#8c8c8c" stroke-width="2.4"/><rect x="36.4" y="1126.4" width="21" height="21" rx="3.5" fill="#fff" stroke="#8c8c8c" stroke-width="2.4"/><rect x="36.4" y="1179.3" width="21" height="21" rx="3.5" fill="#fff" stroke="#8c8c8c" stroke-width="2.4"/><rect x="36.4" y="1232.2" width="21" height="21" rx="3.5" fill="#fff" stroke="#8c8c8c" stroke-width="2.4"/><path fill="none" stroke="#1b1c30" stroke-width="1.4" d="M798.5,866.5 L804,872.3 L809.5,866.5"/><path fill="none" stroke="#1b1c30" stroke-width="1.4" d="M1987.5,866.5 L1993,872.3 L1998.5,866.5"/><path fill="#1b1c30" d="M1024.7,861 L1037.0,861 L1030.8500000000001,853.8 Z M1024.7,863.6 L1037.0,863.6 L1030.8500000000001,870.8 Z"/><path fill="#1b1c30" d="M1449.7,861 L1462.0,861 L1455.8500000000001,853.8 Z M1449.7,863.6 L1462.0,863.6 L1455.8500000000001,870.8 Z"/><rect x="684.0" y="916.4" width="21" height="16.4" rx="2" fill="none" stroke="#e5121c" stroke-width="1.6"/><rect x="684.0" y="919.8000000000001" width="21" height="4" fill="#e5121c"/><rect x="686.4000000000001" y="929.1" width="2.8" height="1.5" fill="#e5121c"/><rect x="690.7" y="929.1" width="4" height="1.5" fill="#e5121c"/><path fill="none" stroke="#f2822a" stroke-width="1.25" d="M724.625,925.3 Q734.5,912.9499999999999 744.375,925.3 Q734.5,937.65 724.625,925.3 Z"/><circle cx="734.5" cy="925.3" r="4.90" fill="#f2822a"/><circle cx="732.60" cy="923.12" r="1.09" fill="#fff"/><g transform="translate(762.9,915.8) scale(1.0000)"><path fill="#2b2b2b" d="M0.60,17.40 L1.34,12.49 L10.53,3.29 L14.71,7.47 L5.51,16.66 Z M11.45,2.37 L13.79,0.04 L14.81,0.08 L17.92,3.19 L17.96,4.21 L15.63,6.55 Z"/><ellipse cx="3.99" cy="14.01" rx="1.3" ry="0.8" transform="rotate(-45 3.99 14.01)" fill="#fff"/><path fill="none" stroke="#fff" stroke-width="0.6" d="M3.22,12.66 L10.99,4.88"/></g><path fill="none" stroke="#e5121c" stroke-width="4.2" d="M801.2,919.5 L812.9,931.2 M812.9,919.5 L801.2,931.2"/><rect x="684.0" y="969.28" width="21" height="16.4" rx="2" fill="none" stroke="#e5121c" stroke-width="1.6"/><rect x="684.0" y="972.6800000000001" width="21" height="4" fill="#e5121c"/><rect x="686.4000000000001" y="981.98" width="2.8" height="1.5" fill="#e5121c"/><rect x="690.7" y="981.98" width="4" height="1.5" fill="#e5121c"/><path fill="none" stroke="#f2822a" stroke-width="1.25" d="M724.625,978.18 Q734.5,965.8299999999999 744.375,978.18 Q734.5,990.53 724.625,978.18 Z"/><circle cx="734.5" cy="978.18" r="4.90" fill="#f2822a"/><circle cx="732.60" cy="976.00" r="1.09" fill="#fff"/><g transform="translate(762.9,968.68) scale(1.0000)"><path fill="#2b2b2b" d="M0.60,17.40 L1.34,12.49 L10.53,3.29 L14.71,7.47 L5.51,16.66 Z M11.45,2.37 L13.79,0.04 L14.81,0.08 L17.92,3.19 L17.96,4.21 L15.63,6.55 Z"/><ellipse cx="3.99" cy="14.01" rx="1.3" ry="0.8" transform="rotate(-45 3.99 14.01)" fill="#fff"/><path fill="none" stroke="#fff" stroke-width="0.6" d="M3.22,12.66 L10.99,4.88"/></g><path fill="none" stroke="#e5121c" stroke-width="4.2" d="M801.2,972.38 L812.9,984.08 M812.9,972.38 L801.2,984.08"/><rect x="684.0" y="1022.16" width="21" height="16.4" rx="2" fill="none" stroke="#e5121c" stroke-width="1.6"/><rect x="684.0" y="1025.56" width="21" height="4" fill="#e5121c"/><rect x="686.4000000000001" y="1034.8600000000001" width="2.8" height="1.5" fill="#e5121c"/><rect x="690.7" y="1034.8600000000001" width="4" height="1.5" fill="#e5121c"/><path fill="none" stroke="#f2822a" stroke-width="1.25" d="M724.625,1031.06 Q734.5,1018.7099999999999 744.375,1031.06 Q734.5,1043.4099999999999 724.625,1031.06 Z"/><circle cx="734.5" cy="1031.06" r="4.90" fill="#f2822a"/><circle cx="732.60" cy="1028.88" r="1.09" fill="#fff"/><g transform="translate(762.9,1021.56) scale(1.0000)"><path fill="#2b2b2b" d="M0.60,17.40 L1.34,12.49 L10.53,3.29 L14.71,7.47 L5.51,16.66 Z M11.45,2.37 L13.79,0.04 L14.81,0.08 L17.92,3.19 L17.96,4.21 L15.63,6.55 Z"/><ellipse cx="3.99" cy="14.01" rx="1.3" ry="0.8" transform="rotate(-45 3.99 14.01)" fill="#fff"/><path fill="none" stroke="#fff" stroke-width="0.6" d="M3.22,12.66 L10.99,4.88"/></g><path fill="none" stroke="#e5121c" stroke-width="4.2" d="M801.2,1025.26 L812.9,1036.96 M812.9,1025.26 L801.2,1036.96"/><rect x="684.0" y="1075.04" width="21" height="16.4" rx="2" fill="none" stroke="#e5121c" stroke-width="1.6"/><rect x="684.0" y="1078.44" width="21" height="4" fill="#e5121c"/><rect x="686.4000000000001" y="1087.74" width="2.8" height="1.5" fill="#e5121c"/><rect x="690.7" y="1087.74" width="4" height="1.5" fill="#e5121c"/><path fill="none" stroke="#f2822a" stroke-width="1.25" d="M724.625,1083.94 Q734.5,1071.5900000000001 744.375,1083.94 Q734.5,1096.29 724.625,1083.94 Z"/><circle cx="734.5" cy="1083.94" r="4.90" fill="#f2822a"/><circle cx="732.60" cy="1081.76" r="1.09" fill="#fff"/><g transform="translate(762.9,1074.44) scale(1.0000)"><path fill="#2b2b2b" d="M0.60,17.40 L1.34,12.49 L10.53,3.29 L14.71,7.47 L5.51,16.66 Z M11.45,2.37 L13.79,0.04 L14.81,0.08 L17.92,3.19 L17.96,4.21 L15.63,6.55 Z"/><ellipse cx="3.99" cy="14.01" rx="1.3" ry="0.8" transform="rotate(-45 3.99 14.01)" fill="#fff"/><path fill="none" stroke="#fff" stroke-width="0.6" d="M3.22,12.66 L10.99,4.88"/></g><path fill="none" stroke="#e5121c" stroke-width="4.2" d="M801.2,1078.14 L812.9,1089.8400000000001 M812.9,1078.14 L801.2,1089.8400000000001"/><rect x="684.0" y="1127.92" width="21" height="16.4" rx="2" fill="none" stroke="#e5121c" stroke-width="1.6"/><rect x="684.0" y="1131.3200000000002" width="21" height="4" fill="#e5121c"/><rect x="686.4000000000001" y="1140.6200000000001" width="2.8" height="1.5" fill="#e5121c"/><rect x="690.7" y="1140.6200000000001" width="4" height="1.5" fill="#e5121c"/><path fill="none" stroke="#f2822a" stroke-width="1.25" d="M724.625,1136.82 Q734.5,1124.47 744.375,1136.82 Q734.5,1149.1699999999998 724.625,1136.82 Z"/><circle cx="734.5" cy="1136.82" r="4.90" fill="#f2822a"/><circle cx="732.60" cy="1134.64" r="1.09" fill="#fff"/><g transform="translate(762.9,1127.32) scale(1.0000)"><path fill="#2b2b2b" d="M0.60,17.40 L1.34,12.49 L10.53,3.29 L14.71,7.47 L5.51,16.66 Z M11.45,2.37 L13.79,0.04 L14.81,0.08 L17.92,3.19 L17.96,4.21 L15.63,6.55 Z"/><ellipse cx="3.99" cy="14.01" rx="1.3" ry="0.8" transform="rotate(-45 3.99 14.01)" fill="#fff"/><path fill="none" stroke="#fff" stroke-width="0.6" d="M3.22,12.66 L10.99,4.88"/></g><path fill="none" stroke="#e5121c" stroke-width="4.2" d="M801.2,1131.02 L812.9,1142.72 M812.9,1131.02 L801.2,1142.72"/><rect x="684.0" y="1180.8" width="21" height="16.4" rx="2" fill="none" stroke="#e5121c" stroke-width="1.6"/><rect x="684.0" y="1184.2" width="21" height="4" fill="#e5121c"/><rect x="686.4000000000001" y="1193.5" width="2.8" height="1.5" fill="#e5121c"/><rect x="690.7" y="1193.5" width="4" height="1.5" fill="#e5121c"/><path fill="none" stroke="#f2822a" stroke-width="1.25" d="M724.625,1189.7 Q734.5,1177.3500000000001 744.375,1189.7 Q734.5,1202.05 724.625,1189.7 Z"/><circle cx="734.5" cy="1189.7" r="4.90" fill="#f2822a"/><circle cx="732.60" cy="1187.52" r="1.09" fill="#fff"/><g transform="translate(762.9,1180.2) scale(1.0000)"><path fill="#2b2b2b" d="M0.60,17.40 L1.34,12.49 L10.53,3.29 L14.71,7.47 L5.51,16.66 Z M11.45,2.37 L13.79,0.04 L14.81,0.08 L17.92,3.19 L17.96,4.21 L15.63,6.55 Z"/><ellipse cx="3.99" cy="14.01" rx="1.3" ry="0.8" transform="rotate(-45 3.99 14.01)" fill="#fff"/><path fill="none" stroke="#fff" stroke-width="0.6" d="M3.22,12.66 L10.99,4.88"/></g><path fill="none" stroke="#e5121c" stroke-width="4.2" d="M801.2,1183.9 L812.9,1195.6000000000001 M812.9,1183.9 L801.2,1195.6000000000001"/><rect x="684.0" y="1233.68" width="21" height="16.4" rx="2" fill="none" stroke="#e5121c" stroke-width="1.6"/><rect x="684.0" y="1237.0800000000002" width="21" height="4" fill="#e5121c"/><rect x="686.4000000000001" y="1246.38" width="2.8" height="1.5" fill="#e5121c"/><rect x="690.7" y="1246.38" width="4" height="1.5" fill="#e5121c"/><path fill="none" stroke="#f2822a" stroke-width="1.25" d="M724.625,1242.58 Q734.5,1230.23 744.375,1242.58 Q734.5,1254.9299999999998 724.625,1242.58 Z"/><circle cx="734.5" cy="1242.58" r="4.90" fill="#f2822a"/><circle cx="732.60" cy="1240.40" r="1.09" fill="#fff"/><g transform="translate(762.9,1233.08) scale(1.0000)"><path fill="#2b2b2b" d="M0.60,17.40 L1.34,12.49 L10.53,3.29 L14.71,7.47 L5.51,16.66 Z M11.45,2.37 L13.79,0.04 L14.81,0.08 L17.92,3.19 L17.96,4.21 L15.63,6.55 Z"/><ellipse cx="3.99" cy="14.01" rx="1.3" ry="0.8" transform="rotate(-45 3.99 14.01)" fill="#fff"/><path fill="none" stroke="#fff" stroke-width="0.6" d="M3.22,12.66 L10.99,4.88"/></g><path fill="none" stroke="#e5121c" stroke-width="4.2" d="M801.2,1236.78 L812.9,1248.48 M812.9,1236.78 L801.2,1248.48"/><path fill="none" stroke="#f2822a" stroke-width="1.25" d="M1932.875,925.1 Q1943,912.85 1953.125,925.1 Q1943,937.35 1932.875,925.1 Z"/><circle cx="1943" cy="925.1" r="4.86" fill="#f2822a"/><circle cx="1941.11" cy="922.94" r="1.08" fill="#fff"/><path fill="none" stroke="#b4b4b4" stroke-width="3" d="M1975.2,919.6 A7.3,7.3 0 1 1 1974.4,930.0"/><path fill="#b4b4b4" d="M1971,915.6 L1978.4,922.9 L1971,922.9 Z"/><path fill="none" stroke="#f2822a" stroke-width="1.25" d="M1932.875,977.98 Q1943,965.73 1953.125,977.98 Q1943,990.23 1932.875,977.98 Z"/><circle cx="1943" cy="977.98" r="4.86" fill="#f2822a"/><circle cx="1941.11" cy="975.82" r="1.08" fill="#fff"/><path fill="none" stroke="#b4b4b4" stroke-width="3" d="M1975.2,972.48 A7.3,7.3 0 1 1 1974.4,982.88"/><path fill="#b4b4b4" d="M1971,968.48 L1978.4,975.78 L1971,975.78 Z"/><path fill="none" stroke="#f2822a" stroke-width="1.25" d="M1932.875,1030.8600000000001 Q1943,1018.6100000000001 1953.125,1030.8600000000001 Q1943,1043.1100000000001 1932.875,1030.8600000000001 Z"/><circle cx="1943" cy="1030.8600000000001" r="4.86" fill="#f2822a"/><circle cx="1941.11" cy="1028.70" r="1.08" fill="#fff"/><path fill="none" stroke="#b4b4b4" stroke-width="3" d="M1975.2,1025.3600000000001 A7.3,7.3 0 1 1 1974.4,1035.76"/><path fill="#b4b4b4" d="M1971,1021.36 L1978.4,1028.66 L1971,1028.66 Z"/><path fill="none" stroke="#f2822a" stroke-width="1.25" d="M1932.875,1083.74 Q1943,1071.49 1953.125,1083.74 Q1943,1095.99 1932.875,1083.74 Z"/><circle cx="1943" cy="1083.74" r="4.86" fill="#f2822a"/><circle cx="1941.11" cy="1081.58" r="1.08" fill="#fff"/><path fill="none" stroke="#b4b4b4" stroke-width="3" d="M1975.2,1078.24 A7.3,7.3 0 1 1 1974.4,1088.64"/><path fill="#b4b4b4" d="M1971,1074.24 L1978.4,1081.54 L1971,1081.54 Z"/><path fill="none" stroke="#f2822a" stroke-width="1.25" d="M1932.875,1136.6200000000001 Q1943,1124.3700000000001 1953.125,1136.6200000000001 Q1943,1148.8700000000001 1932.875,1136.6200000000001 Z"/><circle cx="1943" cy="1136.6200000000001" r="4.86" fill="#f2822a"/><circle cx="1941.11" cy="1134.46" r="1.08" fill="#fff"/><path fill="none" stroke="#b4b4b4" stroke-width="3" d="M1975.2,1131.1200000000001 A7.3,7.3 0 1 1 1974.4,1141.52"/><path fill="#b4b4b4" d="M1971,1127.1200000000001 L1978.4,1134.42 L1971,1134.42 Z"/><path fill="none" stroke="#f2822a" stroke-width="1.25" d="M1932.875,1189.5 Q1943,1177.25 1953.125,1189.5 Q1943,1201.75 1932.875,1189.5 Z"/><circle cx="1943" cy="1189.5" r="4.86" fill="#f2822a"/><circle cx="1941.11" cy="1187.34" r="1.08" fill="#fff"/><path fill="none" stroke="#b4b4b4" stroke-width="3" d="M1975.2,1184.0 A7.3,7.3 0 1 1 1974.4,1194.4"/><path fill="#b4b4b4" d="M1971,1180.0 L1978.4,1187.3 L1971,1187.3 Z"/><path fill="none" stroke="#f2822a" stroke-width="1.25" d="M1932.875,1242.38 Q1943,1230.13 1953.125,1242.38 Q1943,1254.63 1932.875,1242.38 Z"/><circle cx="1943" cy="1242.38" r="4.86" fill="#f2822a"/><circle cx="1941.11" cy="1240.22" r="1.08" fill="#fff"/><path fill="none" stroke="#b4b4b4" stroke-width="3" d="M1975.2,1236.88 A7.3,7.3 0 1 1 1974.4,1247.28"/><path fill="#b4b4b4" d="M1971,1232.88 L1978.4,1240.18 L1971,1240.18 Z"/></svg>
<span class="t" id="h_dol0" style="left:1995.90px;top:917.00px;font-size:18px;line-height:18px;font-weight:normal;color:#bbbbbb;letter-spacing:0.000px;-webkit-text-stroke-width:0.3px;font-family:'Liberation Serif',serif;">$</span>
<span class="t" id="h_dol1" style="left:1995.90px;top:970.00px;font-size:18px;line-height:18px;font-weight:normal;color:#bbbbbb;letter-spacing:0.000px;-webkit-text-stroke-width:0.3px;font-family:'Liberation Serif',serif;">$</span>
<span class="t" id="h_dol2" style="left:1995.90px;top:1023.00px;font-size:18px;line-height:18px;font-weight:normal;color:#bbbbbb;letter-spacing:0.000px;-webkit-text-stroke-width:0.3px;font-family:'Liberation Serif',serif;">$</span>
<span class="t" id="h_dol3" style="left:1995.90px;top:1075.00px;font-size:18px;line-height:18px;font-weight:normal;color:#bbbbbb;letter-spacing:0.000px;-webkit-text-stroke-width:0.3px;font-family:'Liberation Serif',serif;">$</span>
<span class="t" id="h_dol4" style="left:1995.90px;top:1128.00px;font-size:18px;line-height:18px;font-weight:normal;color:#bbbbbb;letter-spacing:0.000px;-webkit-text-stroke-width:0.3px;font-family:'Liberation Serif',serif;">$</span>
<span class="t" id="h_dol5" style="left:1995.90px;top:1181.00px;font-size:18px;line-height:18px;font-weight:normal;color:#bbbbbb;letter-spacing:0.000px;-webkit-text-stroke-width:0.3px;font-family:'Liberation Serif',serif;">$</span>
<span class="t" id="h_dol6" style="left:1995.90px;top:1234.00px;font-size:18px;line-height:18px;font-weight:normal;color:#bbbbbb;letter-spacing:0.000px;-webkit-text-stroke-width:0.3px;font-family:'Liberation Serif',serif;">$</span>
<svg style="position:absolute;left:1000px;top:530px;z-index:7" width="100" height="80" viewBox="1000 530 100 80"><path fill="none" stroke="#e8503a" stroke-width="2.2" d="M1038.7,558.1 L1033.1,558.1 L1033.1,564.2 M1061.3,558.1 L1066.9,558.1 L1066.9,564.2 M1033.1,578.4 L1033.1,584.3 L1038.7,584.3 M1066.9,578.4 L1066.9,584.3 L1061.3,584.3"/><rect fill="#e8503a" x="1037.1" y="562" width="2" height="18.8"/><rect fill="#e8503a" x="1041.8" y="566" width="2" height="14.8"/><rect fill="#e8503a" x="1041.8" y="562.3" width="2" height="1.9"/><rect fill="#e8503a" x="1046.8" y="566" width="2" height="14.8"/><rect fill="#e8503a" x="1046.8" y="562.3" width="2" height="1.9"/><rect fill="#e8503a" x="1051" y="562" width="2" height="18.8"/><rect fill="#e8503a" x="1056" y="566" width="2" height="14.8"/><rect fill="#e8503a" x="1056" y="562.3" width="2" height="1.9"/><rect fill="#e8503a" x="1060.8" y="562" width="2" height="18.8"/></svg>
<svg style="position:absolute;left:0;top:0;z-index:3" width="2048" height="1273" viewBox="0 0 2048 1273"><path fill="#8b8e9b" d="M40,34.4 L49.3,25.2 L58.2,34.4 L56,34.4 L56,43 L51,43 L51,37 L47,37 L47,43 L42.4,43 L42.4,34.4 Z"/><rect fill="#8b8e9b" x="146.6" y="27" width="16.2" height="2.8" rx="0.6"/><rect fill="#8b8e9b" x="150" y="25.8" width="1.6" height="2"/><rect fill="#8b8e9b" x="158.4" y="25.8" width="1.6" height="2"/><rect fill="#8b8e9b" x="146.6" y="31.9" width="16.2" height="11.1" rx="0.6"/><rect fill="#1a1b2c" x="148.2" y="33.9" width="1.6" height="1.8"/><rect fill="#1a1b2c" x="151.2" y="33.9" width="1.6" height="1.8"/><rect fill="#1a1b2c" x="154.2" y="33.9" width="1.6" height="1.8"/><rect fill="#1a1b2c" x="157.2" y="33.9" width="1.6" height="1.8"/><rect fill="#1a1b2c" x="160.2" y="33.9" width="1.6" height="1.8"/><rect fill="#1a1b2c" x="148.2" y="37.0" width="1.6" height="1.8"/><rect fill="#1a1b2c" x="151.2" y="37.0" width="1.6" height="1.8"/><rect fill="#1a1b2c" x="154.2" y="37.0" width="1.6" height="1.8"/><rect fill="#1a1b2c" x="157.2" y="37.0" width="1.6" height="1.8"/><rect fill="#1a1b2c" x="160.2" y="37.0" width="1.6" height="1.8"/><rect fill="#1a1b2c" x="148.2" y="40.1" width="1.6" height="1.8"/><rect fill="#1a1b2c" x="151.2" y="40.1" width="1.6" height="1.8"/><rect fill="#1a1b2c" x="154.2" y="40.1" width="1.6" height="1.8"/><rect fill="#1a1b2c" x="157.2" y="40.1" width="1.6" height="1.8"/><rect fill="#1a1b2c" x="160.2" y="40.1" width="1.6" height="1.8"/><ellipse fill="#8b8e9b" cx="284.6" cy="31.1" rx="4.5" ry="5.4"/><path fill="#8b8e9b" d="M275.8,43.1 C276.2,39.5 279,37.6 282.2,36.6 L287,36.6 C290.4,37.6 293.2,39.5 293.6,43.1 Z"/><rect fill="#fff" x="388.7" y="27" width="17.3" height="2.7" rx="0.5"/><rect fill="#fff" x="388.7" y="32" width="17.3" height="8.2" rx="0.5"/><rect fill="#1f2a38" x="390.2" y="36.4" width="5.2" height="1.8"/><path fill="#fff" d="M488,35 L498,35 L493,40.5 Z"/><rect fill="#8b8e9b" x="539.7" y="36" width="4.2" height="7" rx="1"/><rect fill="#8b8e9b" x="545.3" y="27.1" width="4.5" height="15.9" rx="1"/><rect fill="#8b8e9b" x="551.2" y="31.8" width="4.4" height="11.2" rx="1"/><path fill="#8b8e9b" d="M1579.5,29.4 C1584,29.8 1589,32.5 1588.9,36 C1588.8,38 1587.6,39.3 1586.5,40 L1587.6,42 L1583.5,40.6 C1581,41 1578,40.6 1575.6,39.2 Z"/><ellipse fill="#1a1b2c" cx="1575.7" cy="31.1" rx="9.9" ry="7"/><path fill="#8b8e9b" d="M1575.7,25.1 C1580.6,25.1 1584,27.8 1584,31.1 C1584,34.4 1580.6,37 1575.7,37 C1574.6,37 1573.6,36.9 1572.7,36.6 L1568.6,38.9 L1570,35.6 C1568.3,34.6 1567.3,33 1567.3,31.1 C1567.3,27.8 1570.8,25.1 1575.7,25.1 Z"/><path fill="#8b8e9b" d="M1639,23.4 C1640,23.4 1640.4,24.2 1640.4,24.9 C1643.4,25.8 1645,28.6 1645,32 C1645,36.5 1646.2,38.8 1649,41.9 L1629,41.9 C1631.8,38.8 1633,36.5 1633,32 C1633,28.6 1634.6,25.8 1637.6,24.9 C1637.6,24.2 1638,23.4 1639,23.4 Z"/><path fill="#8b8e9b" d="M1636.4,42.6 L1641.8,42.6 C1641.6,44 1640.4,44.8 1639.1,44.8 C1637.8,44.8 1636.6,44 1636.4,42.6 Z"/><circle cx="1700.3" cy="35.6" r="8.95" fill="none" stroke="#8b8e9b" stroke-width="3.3"/><path fill="none" stroke="#8b8e9b" stroke-width="1.6" d="M1699.6,30.6 L1699.6,36.8 L1703.8,36.8"/><circle cx="1776.6" cy="34.8" r="26" fill="#f8373f"/><path fill="#8b8e9b" d="M1945.7,34.6 L1956.3,34.6 L1951,40.6 Z"/><circle cx="1995" cy="35" r="12" fill="#8b8e9b"/><path fill="none" stroke="#1a1b2c" stroke-width="2.9" d="M1991.5,32.6 C1991.5,30 1993.1,29.5 1995,29.5 C1997,29.5 1998.1,30.6 1998.1,32 C1998.1,33.8 1996.2,34.2 1995.6,35.4 L1995.2,37.2"/><rect fill="#1a1b2c" x="1993.1" y="39.2" width="4" height="2"/></svg></body></html>
